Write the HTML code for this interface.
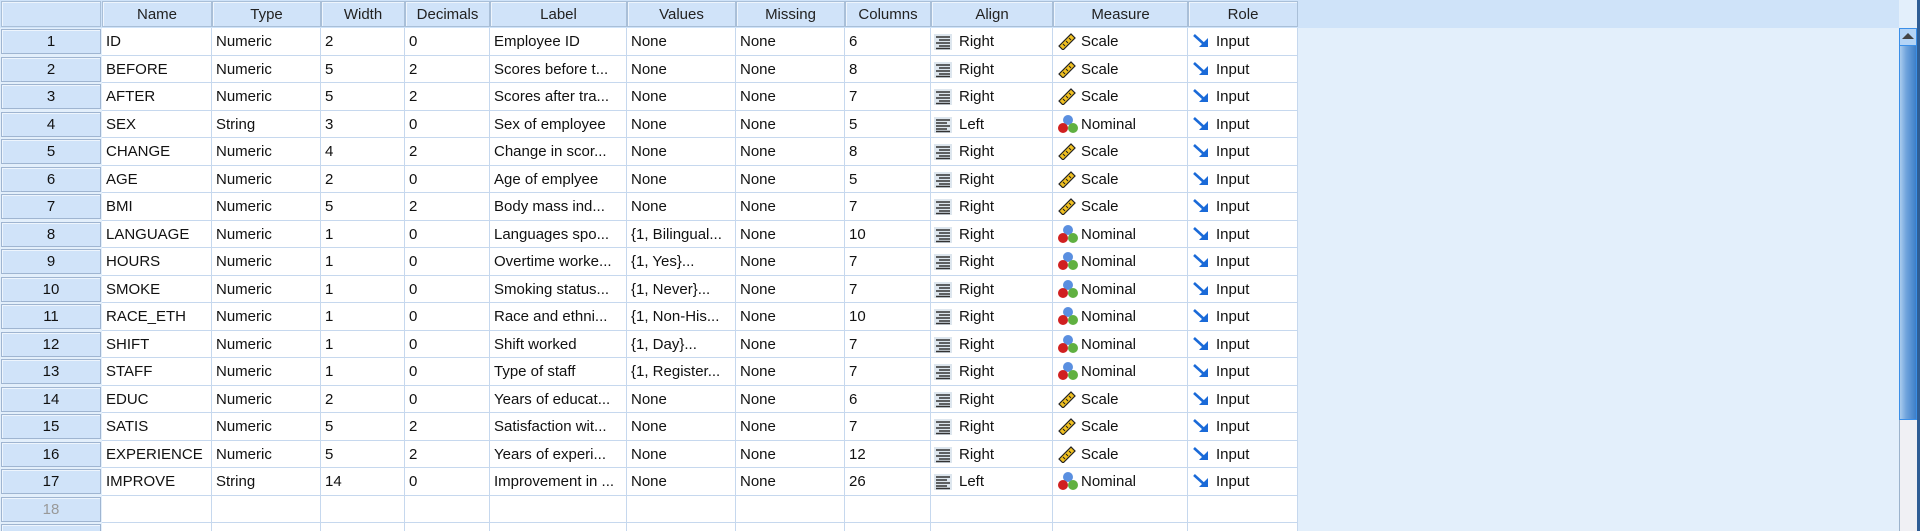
<!DOCTYPE html>
<html style="width:1920px;height:531px;overflow:hidden"><head><meta charset="utf-8"><style>
*{margin:0;padding:0;box-sizing:border-box}
body{width:1920px;height:531px;overflow:hidden;background:#e3effb;font-family:"Liberation Sans",Arial,sans-serif;font-size:15px;color:#111;position:relative}
.hdr{position:absolute;top:0;left:0;width:1899px;height:28px;background:#cfe3f9}
.row{position:absolute;left:0;height:27.5px;width:1298px}
.c{position:absolute;top:0;height:100%;background:#fff;border-right:1px solid #c6d8ee;border-bottom:1px solid #c6d8ee;padding-left:4px;line-height:27px;white-space:nowrap;overflow:hidden}
.h{position:absolute;top:1px;height:26px;background:#d0e3f9;border:1px solid #a9bfd8;box-shadow:inset 1px 1px 0 #eef5fd;text-align:center;line-height:25px;color:#222}
.rh{position:absolute;left:1px;top:1px;width:100px;height:25px;background:#d0e3f9;border:1px solid #9fb5d1;box-shadow:inset 1px 1px 0 #eef5fd;text-align:center;line-height:24px}
svg{position:absolute;top:6px}
.ic{padding-left:28px}
</style></head><body>
<div class="hdr"></div>
<div class="h" style="left:1px;width:100px;top:1px"></div>
<div class="h" style="left:102px;width:110px">Name</div>
<div class="h" style="left:212px;width:109px">Type</div>
<div class="h" style="left:321px;width:84px">Width</div>
<div class="h" style="left:405px;width:85px">Decimals</div>
<div class="h" style="left:490px;width:137px">Label</div>
<div class="h" style="left:627px;width:109px">Values</div>
<div class="h" style="left:736px;width:109px">Missing</div>
<div class="h" style="left:845px;width:86px">Columns</div>
<div class="h" style="left:931px;width:122px">Align</div>
<div class="h" style="left:1053px;width:135px">Measure</div>
<div class="h" style="left:1188px;width:110px">Role</div>
<div id="rows"></div>
<div style="position:absolute;left:1899px;top:28px;width:18px;height:503px;background:#f0f0f4;border-left:1px solid #9cb3cc"></div>
<div style="position:absolute;left:1899px;top:28px;width:18px;height:392px;background:linear-gradient(90deg,#a9cbee,#6fa3dc 40%,#3d7ec8);border:1px solid #3b8fe8"></div>
<div style="position:absolute;left:1899px;top:28px;width:18px;height:18px;background:#b4d4f6;border:1px solid #3b8fe8"></div>
<div style="position:absolute;left:1902px;top:33px;width:0;height:0;border-left:6px solid transparent;border-right:6px solid transparent;border-bottom:6px solid #444"></div>
<div style="position:absolute;left:1917px;top:0;width:3px;height:531px;background:#2f5d94"></div>
<script>
const D=[
["ID","Numeric","2","0","Employee ID","None","None","6","R","S"],
["BEFORE","Numeric","5","2","Scores before t...","None","None","8","R","S"],
["AFTER","Numeric","5","2","Scores after tra...","None","None","7","R","S"],
["SEX","String","3","0","Sex of employee","None","None","5","L","N"],
["CHANGE","Numeric","4","2","Change in scor...","None","None","8","R","S"],
["AGE","Numeric","2","0","Age of emplyee","None","None","5","R","S"],
["BMI","Numeric","5","2","Body mass ind...","None","None","7","R","S"],
["LANGUAGE","Numeric","1","0","Languages spo...","{1, Bilingual...","None","10","R","N"],
["HOURS","Numeric","1","0","Overtime worke...","{1, Yes}...","None","7","R","N"],
["SMOKE","Numeric","1","0","Smoking status...","{1, Never}...","None","7","R","N"],
["RACE_ETH","Numeric","1","0","Race and ethni...","{1, Non-His...","None","10","R","N"],
["SHIFT","Numeric","1","0","Shift worked","{1, Day}...","None","7","R","N"],
["STAFF","Numeric","1","0","Type of staff","{1, Register...","None","7","R","N"],
["EDUC","Numeric","2","0","Years of educat...","None","None","6","R","S"],
["SATIS","Numeric","5","2","Satisfaction wit...","None","None","7","R","S"],
["EXPERIENCE","Numeric","5","2","Years of experi...","None","None","12","R","S"],
["IMPROVE","String","14","0","Improvement in ...","None","None","26","L","N"]];
const X=[102,212,321,405,490,627,736,845,931,1053,1188,1298];
const alR='<svg width="18" height="16" style="left:3px"><rect width="18" height="16" fill="#dde6ee"/><g stroke="#333" stroke-width="1.4"><path d="M2 3h14M5 6h11M2 9h14M5 12h11M2 14.5h14"/></g></svg>';
const alL='<svg width="18" height="16" style="left:3px"><rect width="18" height="16" fill="#dde6ee"/><g stroke="#333" stroke-width="1.4"><path d="M2 3h14M2 6h11M2 9h14M2 12h11M2 14.5h14"/></g></svg>';
const sc='<svg width="20" height="18" style="left:4px;top:4px"><path d="M2 14L14 2l4 4L6 18z" fill="#f0c020" stroke="#222" stroke-width="1.2"/><path d="M6 12l2 2M9 9l2 2M12 6l2 2" stroke="#222"/></svg>';
const nm='<svg width="22" height="20" style="left:4px;top:3px"><circle cx="11" cy="6" r="5" fill="#5a8fe0"/><circle cx="6" cy="14" r="5" fill="#d02020"/><circle cx="16" cy="14" r="5" fill="#60b040"/></svg>';
const inp='<svg width="18" height="16" style="left:4px;top:5px"><path d="M2 2L13 12" stroke="#1a6ad8" stroke-width="2.6"/><path d="M7 14h9V5z" fill="#1a6ad8"/></svg>';
let h='';
for(let i=0;i<19;i++){
 const t=28+i*27.5;const r=D[i];
 h+=`<div class="row" style="top:${t}px"><div class="rh" style="${i>=17?'color:#999':''}">${i+1}</div>`;
 for(let j=0;j<11;j++){
  let txt='',cls='c';
  if(r){
   if(j<8)txt=r[j];
   else if(j==8){cls+=' ic';txt=(r[8]=='R'?alR+'Right':alL+'Left');}
   else if(j==9){cls+=' ic';txt=(r[9]=='S'?sc+'Scale':nm+'Nominal');}
   else {cls+=' ic';txt=inp+'Input';}
  }
  h+=`<div class="${cls}" style="left:${X[j]}px;width:${X[j+1]-X[j]}px">${txt}</div>`;
 }
 h+='</div>';
}
document.getElementById('rows').innerHTML=h;
</script>
</body></html>
